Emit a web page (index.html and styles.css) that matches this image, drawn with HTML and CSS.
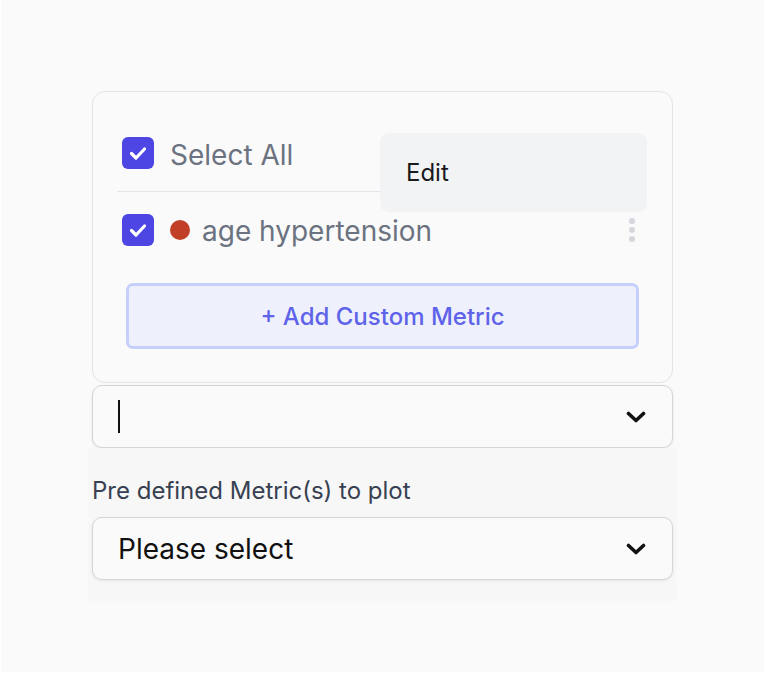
FILE: index.html
```html
<!DOCTYPE html>
<html>
<head>
<meta charset="utf-8">
<link rel="stylesheet" href="styles.css">
</head>
<body>
<div class="page">
  <div class="panel">
    <div class="card">
      <div class="row row-all">
        <span class="check"><svg viewBox="0 0 32 32" width="32" height="32"><path d="M9.5 16.5l4.5 4.5 8.5-9" fill="none" stroke="#fff" stroke-width="3.2" stroke-linecap="round" stroke-linejoin="round"/></svg></span>
        <span class="label-all">Select All</span>
      </div>
      <div class="divider"></div>
      <div class="row row-item">
        <span class="check"><svg viewBox="0 0 32 32" width="32" height="32"><path d="M9.5 16.5l4.5 4.5 8.5-9" fill="none" stroke="#fff" stroke-width="3.2" stroke-linecap="round" stroke-linejoin="round"/></svg></span>
        <span class="dot"></span>
        <span class="label-item">age hypertension</span>
        <span class="kebab"><i></i><i></i><i></i></span>
      </div>
      <button class="add-btn">+ Add Custom Metric</button>
      <div class="menu"><span class="menu-item">Edit</span></div>
    </div>
    <div class="select select-input">
      <span class="caret"></span>
      <svg class="chev" viewBox="0 0 20 12" width="20" height="12"><path d="M2.5 2.5l7.5 7 7.5-7" fill="none" stroke="#111" stroke-width="3.6" stroke-linecap="round" stroke-linejoin="round"/></svg>
    </div>
    <div class="section">
      <div class="field-label">Pre defined Metric(s) to plot</div>
      <div class="select">
        <span class="placeholder">Please select</span>
        <svg class="chev" viewBox="0 0 20 12" width="20" height="12"><path d="M2.5 2.5l7.5 7 7.5-7" fill="none" stroke="#111" stroke-width="3.6" stroke-linecap="round" stroke-linejoin="round"/></svg>
      </div>
    </div>
  </div>
</div>
</body>
</html>
```

FILE: styles.css
```css
html, body {
  margin: 0;
  padding: 0;
  background: #ffffff;
}
body {
  font-family: Inter, "Liberation Sans", sans-serif;
}
.page {
  margin-left: 1px;
  height: 672px;
  background: #fafafa;
  padding-top: 91px;
  box-sizing: border-box;
}
.panel {
  margin-left: 91px;
  width: 581px;
}
.card {
  position: relative;
  border: 1px solid #e3e4e8;
  border-radius: 13px;
  padding: 45px 24px 33px 24px;
  background: #fafafa;
}
.row {
  display: flex;
  align-items: center;
  padding-left: 5px;
  height: 32px;
}
.check {
  width: 32px;
  height: 32px;
  border-radius: 6px;
  background: #4d46e2;
  display: flex;
  flex: none;
}
.label-all {
  margin-left: 16px;
  font-size: 28px;
  color: #6b7280;
  padding-top: 3px;
}
.divider {
  height: 1px;
  background: #e3e5e9;
  margin: 22px 1px 22px 0;
}
.dot {
  width: 20px;
  height: 20px;
  border-radius: 50%;
  background: #c13f27;
  margin-left: 16px;
  flex: none;
}
.label-item {
  margin-left: 12px;
  font-size: 28px;
  color: #6b7280;
  flex: 1;
  padding-top: 2px;
}
.kebab {
  display: flex;
  flex-direction: column;
  gap: 3px;
  margin-right: 13px;
}
.kebab i {
  display: block;
  width: 6px;
  height: 6px;
  border-radius: 50%;
  background: #d4d6db;
}
.add-btn {
  display: block;
  box-sizing: border-box;
  width: 513px;
  height: 66px;
  margin: 37px 0 0 9px;
  border: 3px solid #c5cffc;
  border-radius: 7px;
  background: #eef1fb;
  color: #5f63e9;
  font-family: Inter, "Liberation Sans", sans-serif;
  font-size: 24px;
  font-weight: 500;
}
.menu {
  position: absolute;
  left: 287px;
  top: 41px;
  width: 267px;
  height: 79px;
  border-radius: 9px;
  background: #f2f3f5;
  display: flex;
  align-items: center;
}
.menu-item {
  margin-left: 26px;
  font-size: 24px;
  color: #1a1a1a;
}
.select {
  box-sizing: border-box;
  height: 63px;
  border: 1px solid #d4d5d9;
  border-radius: 10px;
  background: #fafafa;
  box-shadow: 0 1px 3px rgba(0,0,0,0.08);
  display: flex;
  align-items: center;
  padding: 0 26px 0 25px;
}
.select-input {
  margin-top: 2px;
}
.caret {
  width: 2px;
  height: 33px;
  background: #111;
}
.chev {
  margin-left: auto;
}
.section {
  background: #f7f7f7;
  margin: 0 -4px;
  padding: 29px 4px 21px 4px;
}
.field-label {
  font-size: 24px;
  color: #374151;
  margin-bottom: 12px;
  line-height: 28px;
}
.placeholder {
  font-size: 28px;
  color: #111;
}
```
